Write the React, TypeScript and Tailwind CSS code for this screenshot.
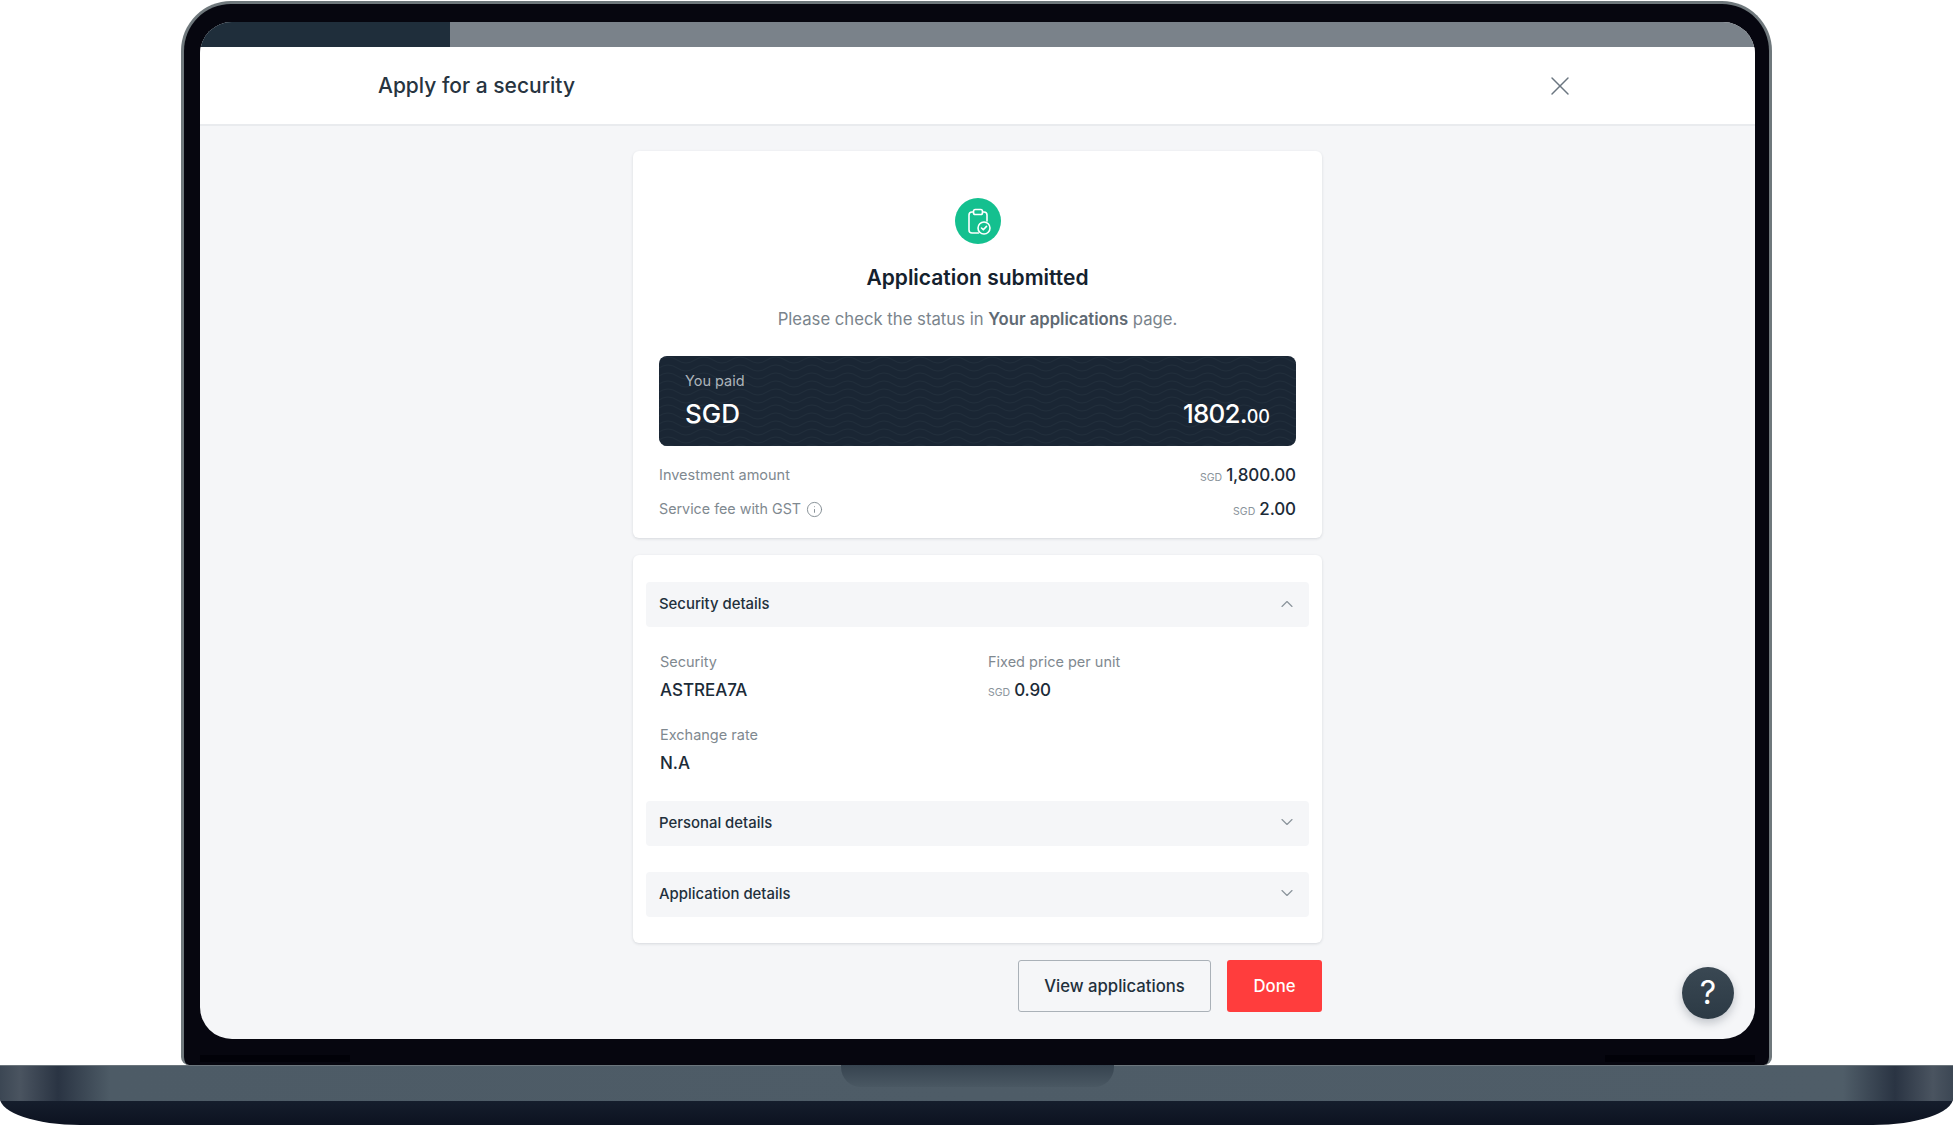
import { ChevronDown, ChevronUp, Info, X } from 'lucide-react'

function Amount({ value, className = '' }: { value: string; className?: string }) {
  return (
    <span className={`flex items-baseline gap-1 ${className}`}>
      <span className="text-[10.5px] font-normal text-[#8a939b]">SGD</span>
      <span className="text-[17px] font-medium tracking-[-0.1px] text-[#1c2b38]">{value}</span>
    </span>
  )
}

function SectionRow({ title, open = false, className = '' }: { title: string; open?: boolean; className?: string }) {
  return (
    <div className={`flex h-[45px] items-center justify-between rounded-[4px] bg-[#f5f6f8] pl-[13px] pr-[12px] ${className}`}>
      <span className="text-[14.9px] font-medium text-[#22303c]">{title}</span>
      {open ? (
        <ChevronUp size={20} strokeWidth={1.4} className="-mt-[2px] text-[#8b949c]" />
      ) : (
        <ChevronDown size={20} strokeWidth={1.4} className="-mt-[3px] text-[#8b949c]" />
      )}
    </div>
  )
}

function Field({ label, children }: { label: string; children: React.ReactNode }) {
  return (
    <div>
      <div className="text-[14.5px] leading-5 text-[#7f8990]">{label}</div>
      <div className="mt-[7px] flex h-6 items-center text-[17px] font-medium text-[#1c2b38]">{children}</div>
    </div>
  )
}

function ClipboardIcon() {
  return (
    <svg width="46" height="46" viewBox="0 0 46 46" fill="none" stroke="#fff" strokeWidth="1.6" strokeLinecap="round" strokeLinejoin="round">
      <path d="M18.5 14h-1.5a3 3 0 0 0-3 3v15a3 3 0 0 0 3 3h6.5" />
      <path d="M27.5 14h1.5a3 3 0 0 1 3 3v6" />
      <rect x="18.5" y="11.5" width="9" height="5" rx="1.8" />
      <circle cx="29" cy="30" r="6" />
      <path d="M26.5 30l1.8 1.8 3.2-3.4" />
    </svg>
  )
}

function WavePattern() {
  return (
    <svg className="absolute inset-0 h-full w-full" aria-hidden="true">
      <defs>
        <pattern id="waves" width="36" height="8" patternUnits="userSpaceOnUse">
          <path d="M0 4q9-6 18 0t18 0" fill="none" stroke="#212e3c" strokeWidth="1" />
        </pattern>
      </defs>
      <rect width="100%" height="100%" fill="url(#waves)" />
    </svg>
  )
}

export default function App() {
  return (
    <div className="h-[1125px] w-[1953px] overflow-hidden bg-white font-['Inter',sans-serif]">
      {/* lid */}
      <div className="ml-[181px] mt-[1px] h-[1064px] w-[1591px] rounded-t-[50px] rounded-b-[8px] border-x-[3px] border-t-[3px] border-[#6f787c] bg-[#06060f] pl-[16px] pr-[14px] pt-[18px]">
        <div className="relative flex h-[1017px] flex-col overflow-hidden rounded-[32px] bg-[#f5f6f8]">
          <div className="flex h-[25px] shrink-0 bg-[#7a828a]">
            <div className="w-[250px] bg-[#1f2e3b]" />
          </div>
          <header className="flex h-[79px] shrink-0 items-center justify-between border-b-2 border-[#e9ebee] bg-white pl-[178px] pr-[179px]">
            <h1 className="text-[21px] font-medium text-[#27343f]">Apply for a security</h1>
            <X size={32} strokeWidth={1.1} className="text-[#6b7680]" />
          </header>

          <main className="ml-[433px] w-[689px] pt-[25px]">
            <section className="flex flex-col items-center rounded-[6px] bg-white px-[26px] pb-[17px] pt-[47px] shadow-[0_1px_3px_rgba(30,45,60,0.14)]">
              <div className="h-[46px] w-[46px] rounded-full bg-[#14c08f]">
                <ClipboardIcon />
              </div>
              <h2 className="mt-[20px] text-[21px] font-semibold leading-7 text-[#14212d]">Application submitted</h2>
              <p className="mt-[15px] text-[16.7px] leading-6 text-[#7a848c]">
                Please check the status in <span className="font-semibold text-[#5f6a73]">Your applications</span> page.
              </p>

              <div className="relative mt-[25px] h-[90px] w-full overflow-hidden rounded-[8px] bg-[#1a2634]">
                <WavePattern />
                <div className="relative flex h-full flex-col px-[26px] pt-[15px]">
                  <span className="text-[14.5px] leading-5 text-[#aeb5bb]">You paid</span>
                  <div className="mt-[7px] flex items-baseline justify-between text-[26px] font-medium leading-8 text-white">
                    <span>SGD</span>
                    <span className="tracking-[-0.8px]">
                      1802.<span className="text-[18px] tracking-normal">00</span>
                    </span>
                  </div>
                </div>
              </div>

              <div className="mt-[17px] flex h-6 w-full items-center justify-between">
                <span className="text-[14.5px] text-[#7f8990]">Investment amount</span>
                <Amount value="1,800.00" className="mt-[2px]" />
              </div>
              <div className="mt-[10px] flex h-6 w-full items-center justify-between">
                <span className="flex items-center gap-[5px] text-[14.3px] text-[#7f8990]">
                  Service fee with GST
                  <Info size={17} strokeWidth={1.3} className="text-[#7f8990]" />
                </span>
                <Amount value="2.00" className="mt-[2px]" />
              </div>
            </section>

            <section className="mt-[17px] rounded-[6px] bg-white px-[13px] pb-[26px] pt-[27px] shadow-[0_1px_3px_rgba(30,45,60,0.14)]">
              <SectionRow title="Security details" open />
              <div className="mt-[25px] grid grid-cols-[328px_1fr] gap-y-[22px] pl-[14px]">
                <Field label="Security">ASTREA7A</Field>
                <Field label="Fixed price per unit">
                  <Amount value="0.90" />
                </Field>
                <Field label="Exchange rate">N.A</Field>
              </div>
              <SectionRow title="Personal details" className="mt-[25px]" />
              <SectionRow title="Application details" className="mt-[26px]" />
            </section>

            <div className="mt-[17px] flex justify-end gap-4">
              <button className="h-[52px] w-[193px] rounded-[3px] border border-[#aab1b8] bg-transparent pt-[2px] text-[16.7px] font-medium text-[#22303c]">
                View applications
              </button>
              <button className="h-[52px] w-[95px] rounded-[3px] bg-[#ff3d3d] pt-[2px] text-[16.7px] font-medium text-white">Done</button>
            </div>
          </main>

          <div className="absolute bottom-[20px] right-[21px] flex h-[52px] w-[52px] items-center justify-center rounded-full bg-gradient-to-b from-[#3a4853] to-[#2c3a45] text-[32px] font-normal text-white shadow-[0_4px_10px_rgba(30,45,60,0.25)]">
            ?
          </div>
        </div>
        <div className="mt-[16px] flex justify-between">
          <div className="h-[7px] w-[150px] bg-[#010108]" />
          <div className="h-[7px] w-[150px] bg-[#010108]" />
        </div>
      </div>

      {/* base */}
      <div className="relative h-[60px] w-full overflow-hidden rounded-bl-[80px_27px] rounded-br-[80px_27px] bg-[linear-gradient(to_bottom,#232f3e,#0c1220)]">
        <div className="h-[36px] border-t border-[#6b757c] bg-[linear-gradient(to_right,#3c4754_0px,#4a5460_20px,#2a3443_58px,#4d5b66_110px,#4f5d68_1843px,#2a3443_1895px,#4a5460_1933px,#3c4754_1953px)]" />
        <div className="absolute left-[841px] top-0 h-[22px] w-[273px] rounded-b-[20px] bg-[linear-gradient(to_bottom,#36434f,#4a5863)]" />
      </div>
    </div>
  )
}
